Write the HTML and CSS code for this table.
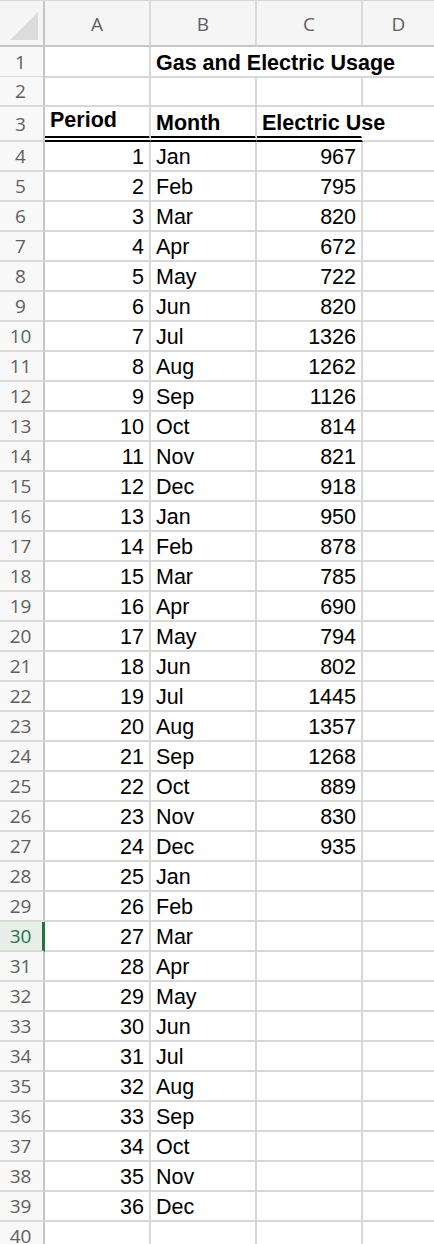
FILE: index.html
```html
<!DOCTYPE html>
<html>
<head>
<meta charset="utf-8">
<link rel="stylesheet" href="styles.css">
</head>
<body>
<div class="sheet">
  <div class="row colhead">
    <div class="corner"><svg class="tri" width="32" height="32" viewBox="0 0 32 32"><polygon points="2,30 30,30 30,2" fill="#dcdcdc"/></svg></div>
    <div class="ch">A</div><div class="ch">B</div><div class="ch">C</div><div class="ch last">D</div>
  </div>
  <div class="row r1"><div class="rh">1</div><div class="c"></div><div class="c bold span3">Gas and Electric Usage</div></div>
  <div class="row"><div class="rh">2</div><div class="c"></div><div class="c"></div><div class="c"></div><div class="c last"></div></div>
  <div class="row r3"><div class="rh">3</div><div class="c bold dbl top">Period</div><div class="c bold dbl bot">Month</div><div class="c bold dbl bot nor">Electric Use</div><div class="c last"></div></div>
  <div class="row"><div class="rh">4</div><div class="c n">1</div><div class="c">Jan</div><div class="c n">967</div><div class="c last"></div></div>
  <div class="row"><div class="rh">5</div><div class="c n">2</div><div class="c">Feb</div><div class="c n">795</div><div class="c last"></div></div>
  <div class="row"><div class="rh">6</div><div class="c n">3</div><div class="c">Mar</div><div class="c n">820</div><div class="c last"></div></div>
  <div class="row"><div class="rh">7</div><div class="c n">4</div><div class="c">Apr</div><div class="c n">672</div><div class="c last"></div></div>
  <div class="row"><div class="rh">8</div><div class="c n">5</div><div class="c">May</div><div class="c n">722</div><div class="c last"></div></div>
  <div class="row"><div class="rh">9</div><div class="c n">6</div><div class="c">Jun</div><div class="c n">820</div><div class="c last"></div></div>
  <div class="row"><div class="rh">10</div><div class="c n">7</div><div class="c">Jul</div><div class="c n">1326</div><div class="c last"></div></div>
  <div class="row"><div class="rh">11</div><div class="c n">8</div><div class="c">Aug</div><div class="c n">1262</div><div class="c last"></div></div>
  <div class="row"><div class="rh">12</div><div class="c n">9</div><div class="c">Sep</div><div class="c n">1126</div><div class="c last"></div></div>
  <div class="row"><div class="rh">13</div><div class="c n">10</div><div class="c">Oct</div><div class="c n">814</div><div class="c last"></div></div>
  <div class="row"><div class="rh">14</div><div class="c n">11</div><div class="c">Nov</div><div class="c n">821</div><div class="c last"></div></div>
  <div class="row"><div class="rh">15</div><div class="c n">12</div><div class="c">Dec</div><div class="c n">918</div><div class="c last"></div></div>
  <div class="row"><div class="rh">16</div><div class="c n">13</div><div class="c">Jan</div><div class="c n">950</div><div class="c last"></div></div>
  <div class="row"><div class="rh">17</div><div class="c n">14</div><div class="c">Feb</div><div class="c n">878</div><div class="c last"></div></div>
  <div class="row"><div class="rh">18</div><div class="c n">15</div><div class="c">Mar</div><div class="c n">785</div><div class="c last"></div></div>
  <div class="row"><div class="rh">19</div><div class="c n">16</div><div class="c">Apr</div><div class="c n">690</div><div class="c last"></div></div>
  <div class="row"><div class="rh">20</div><div class="c n">17</div><div class="c">May</div><div class="c n">794</div><div class="c last"></div></div>
  <div class="row"><div class="rh">21</div><div class="c n">18</div><div class="c">Jun</div><div class="c n">802</div><div class="c last"></div></div>
  <div class="row"><div class="rh">22</div><div class="c n">19</div><div class="c">Jul</div><div class="c n">1445</div><div class="c last"></div></div>
  <div class="row"><div class="rh">23</div><div class="c n">20</div><div class="c">Aug</div><div class="c n">1357</div><div class="c last"></div></div>
  <div class="row"><div class="rh">24</div><div class="c n">21</div><div class="c">Sep</div><div class="c n">1268</div><div class="c last"></div></div>
  <div class="row"><div class="rh">25</div><div class="c n">22</div><div class="c">Oct</div><div class="c n">889</div><div class="c last"></div></div>
  <div class="row"><div class="rh">26</div><div class="c n">23</div><div class="c">Nov</div><div class="c n">830</div><div class="c last"></div></div>
  <div class="row"><div class="rh">27</div><div class="c n">24</div><div class="c">Dec</div><div class="c n">935</div><div class="c last"></div></div>
  <div class="row"><div class="rh">28</div><div class="c n">25</div><div class="c">Jan</div><div class="c n"></div><div class="c last"></div></div>
  <div class="row"><div class="rh">29</div><div class="c n">26</div><div class="c">Feb</div><div class="c n"></div><div class="c last"></div></div>
  <div class="row"><div class="rh active">30</div><div class="c n">27</div><div class="c">Mar</div><div class="c n"></div><div class="c last"></div></div>
  <div class="row"><div class="rh">31</div><div class="c n">28</div><div class="c">Apr</div><div class="c n"></div><div class="c last"></div></div>
  <div class="row"><div class="rh">32</div><div class="c n">29</div><div class="c">May</div><div class="c n"></div><div class="c last"></div></div>
  <div class="row"><div class="rh">33</div><div class="c n">30</div><div class="c">Jun</div><div class="c n"></div><div class="c last"></div></div>
  <div class="row"><div class="rh">34</div><div class="c n">31</div><div class="c">Jul</div><div class="c n"></div><div class="c last"></div></div>
  <div class="row"><div class="rh">35</div><div class="c n">32</div><div class="c">Aug</div><div class="c n"></div><div class="c last"></div></div>
  <div class="row"><div class="rh">36</div><div class="c n">33</div><div class="c">Sep</div><div class="c n"></div><div class="c last"></div></div>
  <div class="row"><div class="rh">37</div><div class="c n">34</div><div class="c">Oct</div><div class="c n"></div><div class="c last"></div></div>
  <div class="row"><div class="rh">38</div><div class="c n">35</div><div class="c">Nov</div><div class="c n"></div><div class="c last"></div></div>
  <div class="row"><div class="rh">39</div><div class="c n">36</div><div class="c">Dec</div><div class="c n"></div><div class="c last"></div></div>
  <div class="row"><div class="rh">40</div><div class="c"></div><div class="c"></div><div class="c"></div><div class="c last"></div></div>
</div>
</body>
</html>
```
FILE: styles.css
```css
html, body {
  margin: 0;
  padding: 0;
  background: #fff;
  overflow: hidden;
}
.sheet {
  width: 434px;
  height: 1244px;
  overflow: hidden;
  font-family: "Liberation Sans", Arial, sans-serif;
  font-size: 21.5px;
  color: #000;
}
.row {
  display: grid;
  grid-template-columns: 45px 106px 106px 106px 1fr;
  height: 30px;
}
.colhead {
  height: 47px;
  background: #f5f5f5;
  border-top: 1px solid #d6d6d6;
  box-sizing: border-box;
}
.corner {
  border-right: 2px solid #c6c6c6;
  border-bottom: 2px solid #c6c6c6;
  display: flex;
  align-items: flex-end;
  justify-content: flex-end;
  padding: 0 3px 3px 0;
  box-sizing: border-box;
}
.tri {
  display: block;
}
.ch {
  font-family: "Open Sans", "DejaVu Sans", sans-serif;
  font-size: 19px;
  color: #5f5f5f;
  display: flex;
  align-items: center;
  justify-content: center;
  border-right: 2px solid #dadada;
  border-bottom: 2px solid #c6c6c6;
  padding-top: 1px;
}
.ch.last {
  border-right: none;
}
.rh {
  font-family: "Open Sans", "DejaVu Sans", sans-serif;
  font-size: 19px;
  color: #5f5f5f;
  background: #f8f8f8;
  display: flex;
  align-items: center;
  justify-content: center;
  border-right: 2px solid #c6c6c6;
  border-bottom: 2px solid #dadada;
  padding-right: 2px;
}
.rh.active {
  background: #e9eee9;
  color: #217346;
  border-right: 3px solid #217346;
  padding-right: 1px;
}
.c {
  border-right: 2px solid #d8d8d8;
  border-bottom: 2px solid #d8d8d8;
  display: flex;
  align-items: center;
  padding: 2px 5px 0 5px;
  white-space: nowrap;
  min-width: 0;
  overflow: visible;
  position: relative;
  z-index: 1;
}
.c.last {
  border-right: none;
  z-index: 0;
}
.c.n {
  justify-content: flex-end;
}
.bold {
  font-weight: bold;
}
.span3 {
  grid-column: span 3;
  border-right: none;
  padding-left: 5px;
  padding-top: 4px;
}
.r3 {
  height: 35px;
}
.dbl {
  border-bottom: 6px double #000;
}
.top {
  padding-top: 0;
  padding-bottom: 3px;
}
.bot {
  padding-top: 3px;
  padding-bottom: 0;
}
.nor {
  border-right-color: transparent;
}
```
